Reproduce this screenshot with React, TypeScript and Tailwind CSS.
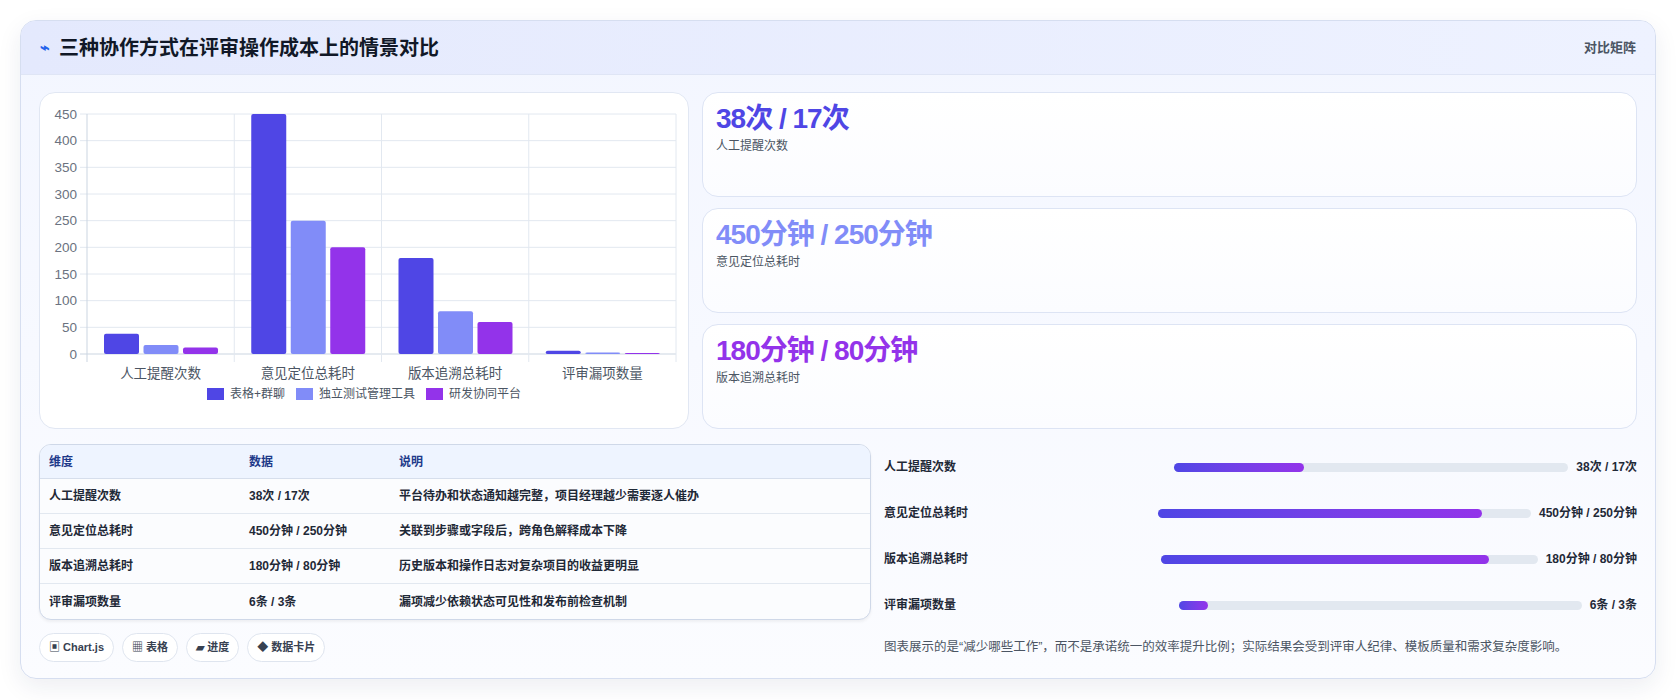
import React from "react";

const cats = ["人工提醒次数", "意见定位总耗时", "版本追溯总耗时", "评审漏项数量"];
const series = [
  { name: "表格+群聊", color: "#4f46e5", data: [38, 450, 180, 6] },
  { name: "独立测试管理工具", color: "#818cf8", data: [17, 250, 80, 3] },
  { name: "研发协同平台", color: "#9333ea", data: [12, 200, 60, 2] },
];

function Chart() {
  const x0 = 47, x1 = 636, y0 = 261, y450 = 21;
  const cw = (x1 - x0) / 4;
  const sy = (v: number) => y0 - (v / 450) * (y0 - y450);
  const ticks = [0, 50, 100, 150, 200, 250, 300, 350, 400, 450];
  return (
    <svg width="650" height="292" style={{ fontFamily: "'Liberation Sans','Noto Sans CJK SC',sans-serif" }}>
      {ticks.map((t) => (
        <g key={t}>
          <line x1={x0 - 7} x2={x1} y1={sy(t)} y2={sy(t)} stroke={t === 0 ? "#cbd5e1" : "#e2e8f0"} />
          <text x={37} y={sy(t) + 4.5} textAnchor="end" fontSize="13.5" fill="#6b7280">{t}</text>
        </g>
      ))}
      {[0, 1, 2, 3, 4].map((i) => (
        <line key={i} x1={x0 + cw * i} x2={x0 + cw * i} y1={y450} y2={y0 + 8} stroke={i === 0 ? "#cbd5e1" : "#e2e8f0"} />
      ))}
      {cats.map((c, i) => (
        <g key={c}>
          {series.map((s, j) => {
            const y = sy(s.data[i]);
            return <rect key={j} x={x0 + cw * i + 17 + j * 39.5} y={y} width={35} height={y0 - y} rx={2} fill={s.color} />;
          })}
          <text x={x0 + cw * i + cw / 2} y={285} textAnchor="middle" fontSize="13.5" fill="#4b5563">{c}</text>
        </g>
      ))}
    </svg>
  );
}

const stats = [
  { v: "38次 / 17次", l: "人工提醒次数", c: "text-[#4f46e5]" },
  { v: "450分钟 / 250分钟", l: "意见定位总耗时", c: "text-[#818cf8]" },
  { v: "180分钟 / 80分钟", l: "版本追溯总耗时", c: "text-[#9333ea]" },
];

const rows = [
  ["人工提醒次数", "38次 / 17次", "平台待办和状态通知越完整，项目经理越少需要逐人催办"],
  ["意见定位总耗时", "450分钟 / 250分钟", "关联到步骤或字段后，跨角色解释成本下降"],
  ["版本追溯总耗时", "180分钟 / 80分钟", "历史版本和操作日志对复杂项目的收益更明显"],
  ["评审漏项数量", "6条 / 3条", "漏项减少依赖状态可见性和发布前检查机制"],
];

const bars = [
  { l: "人工提醒次数", v: "38次 / 17次", p: 33 },
  { l: "意见定位总耗时", v: "450分钟 / 250分钟", p: 87 },
  { l: "版本追溯总耗时", v: "180分钟 / 80分钟", p: 87 },
  { l: "评审漏项数量", v: "6条 / 3条", p: 7 },
];

export default function App() {
  return (
    <div className="w-[1678px] h-[700px] bg-white pt-[20px] pl-[20px]" style={{ fontFamily: "'Liberation Sans','Noto Sans CJK SC',sans-serif" }}>
      <div className="w-[1636px] h-[659px] rounded-2xl border border-[#d6def0] overflow-hidden bg-gradient-to-b from-[#f3f6ff] to-[#fbfcff] shadow-[0_8px_24px_rgba(30,41,90,0.08)]">
        <div className="h-[54px] flex items-center justify-between px-[19px] bg-gradient-to-r from-[#e4e9fd] to-[#eef2ff] border-b border-[#dfe5f5]">
          <div className="flex items-center gap-[9px]">
            <span className="text-[#2563eb] text-[16px] font-bold">⌁</span>
            <span className="text-[20px] font-bold text-[#111827]">三种协作方式在评审操作成本上的情景对比</span>
          </div>
          <span className="text-[13px] font-semibold text-[#4b5563]">对比矩阵</span>
        </div>
        <div className="px-[18px] pt-[17px]">
          <div className="flex gap-[13px]">
            <div className="w-[650px] h-[337px] bg-white rounded-2xl border border-[#e1e7f3]">
              <Chart />
              <div className="flex justify-center gap-[11px] text-[12px] text-[#4b5563]">
                {series.map((s) => (
                  <div key={s.name} className="flex items-center gap-[6px]">
                    <span className="w-[17px] h-[12px]" style={{ background: s.color }} />
                    {s.name}
                  </div>
                ))}
              </div>
            </div>
            <div className="flex-1 flex flex-col gap-[11px]">
              {stats.map((s) => (
                <div key={s.l} className="h-[105px] bg-gradient-to-b from-white to-[#fbfcff] rounded-2xl border border-[#dde4f4] px-[13px] pt-[9px]">
                  <div className={`text-[28px] font-bold tracking-[-1px] leading-[34px] ${s.c}`}>{s.v}</div>
                  <div className="text-[12px] text-[#4b5563] mt-[1px]">{s.l}</div>
                </div>
              ))}
            </div>
          </div>
          <div className="flex gap-[13px] mt-[15px]">
            <div className="w-[832px] shrink-0">
              <div className="rounded-xl border border-[#cfd8e8] overflow-hidden bg-[#fbfcfe] shadow-[0_2px_3px_rgba(0,0,0,0.05)]">
                <div className="flex h-[34px] items-center bg-[#eef4ff] border-b border-[#d6deec] text-[12px] font-bold text-[#1e3a8a]">
                  <div className="w-[209px] pl-[9px]">维度</div>
                  <div className="w-[150px]">数据</div>
                  <div>说明</div>
                </div>
                {rows.map((r, i) => (
                  <div key={i} className={`flex h-[35px] items-center text-[12px] font-semibold text-[#1f2937] ${i < 3 ? "border-b border-[#e2e8f0]" : ""}`}>
                    <div className="w-[209px] pl-[9px]">{r[0]}</div>
                    <div className="w-[150px]">{r[1]}</div>
                    <div>{r[2]}</div>
                  </div>
                ))}
              </div>
              <div className="flex gap-[8px] mt-[13px]">
                {["▣ Chart.js", "▦ 表格", "▰ 进度", "◆ 数据卡片"].map((c) => (
                  <span key={c} className="h-[29px] px-[9px] flex items-center rounded-full border border-[#dfe5ef] bg-white text-[11px] font-bold text-[#374151]">{c}</span>
                ))}
              </div>
            </div>
            <div className="flex-1 pt-[0px]">
              {bars.map((b) => (
                <div key={b.l} className="h-[46px] flex items-center text-[12px] font-semibold text-[#1f2937]">
                  <div className="flex-[1] basis-0">{b.l}</div>
                  <div className="flex-[1.4] basis-0 h-[9px] rounded-full bg-[#e2e8f0] mx-[8px]">
                    <div className="h-full rounded-full bg-gradient-to-r from-[#4f46e5] to-[#9333ea]" style={{ width: `${b.p}%` }} />
                  </div>
                  <div className="shrink-0">{b.v}</div>
                </div>
              ))}
              <div className="mt-[10px] text-[12.5px] text-[#4b5563] whitespace-nowrap">图表展示的是“减少哪些工作”，而不是承诺统一的效率提升比例；实际结果会受到评审人纪律、模板质量和需求复杂度影响。</div>
            </div>
          </div>
        </div>
      </div>
    </div>
  );
}
